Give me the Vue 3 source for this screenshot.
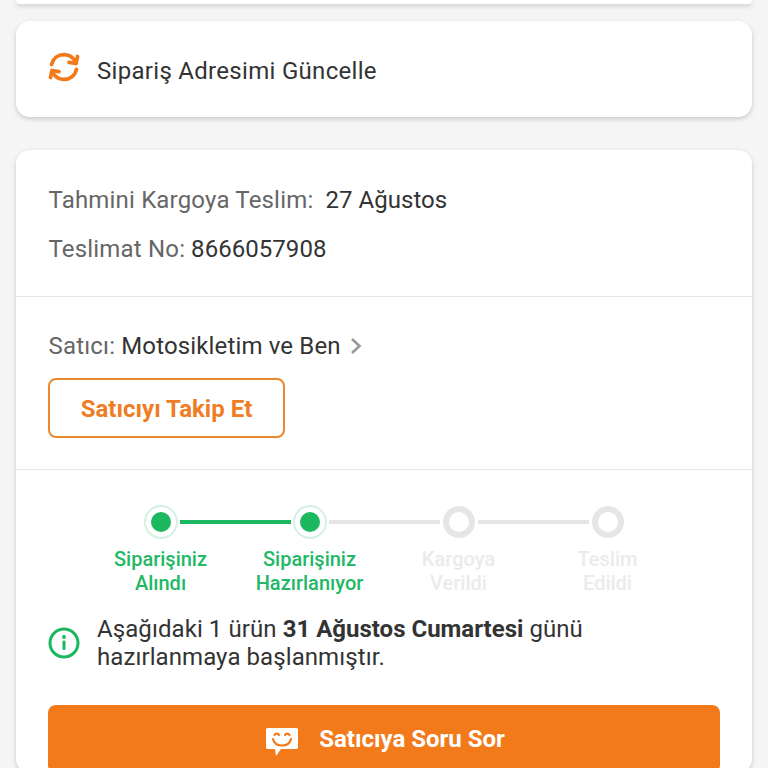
<template>
  <div class="page">
    <div class="card top-stub"></div>

    <div class="card address-card">
      <svg class="refresh-icon" viewBox="0 0 32 32" fill="none" stroke="#f27a1a" stroke-width="3.8" stroke-linecap="round" stroke-linejoin="round">
        <path d="M3.500 13.500C5 7.500 10 3.600 16 3.600c4.400 0 8 2 10.400 5.400" />
        <path d="M28.500 18.500C27 24.500 22 28.400 16 28.400c-4.400 0-8-2-10.400-5.400" />
        <path d="M29.500 5.500 28 12.500l-7-1.200" />
        <path d="M2.500 26.500 4 19.500l7 1.200" />
      </svg>
      <span class="address-text">Sipariş Adresimi Güncelle</span>
    </div>

    <div class="card detail-card">
      <section class="info-section">
        <p class="info-row"><span class="label">Tahmini Kargoya Teslim:</span><span class="value gap">27 Ağustos</span></p>
        <p class="info-row"><span class="label">Teslimat No:</span> <span class="value">8666057908</span></p>
      </section>

      <section class="seller-section">
        <div class="seller-row">
          <span class="label">Satıcı:</span><span class="value seller-name">Motosikletim ve Ben</span>
          <svg class="chevron" viewBox="0 0 12 18" fill="none" stroke="#999999" stroke-width="2.600">
            <path d="M2 2l7.500 7L2 16" />
          </svg>
        </div>
        <button class="follow-btn">Satıcıyı Takip Et</button>
      </section>

      <section class="status-section">
        <div class="steps">
          <div v-for="(step, index) in steps" :key="step.bottom" class="step" :class="{ done: step.done }">
            <div class="track">
              <span class="line" :class="lineClass(index, 'left')"></span>
              <span class="dot"></span>
              <span class="line" :class="lineClass(index, 'right')"></span>
            </div>
            <div class="step-label">{{ step.top }}<br />{{ step.bottom }}</div>
          </div>
        </div>

        <div class="notice">
          <svg class="info-icon" viewBox="0 0 32 32" fill="none">
            <circle cx="16" cy="16" r="14" stroke="#1bb85f" stroke-width="3" />
            <circle cx="16" cy="10" r="1.900" fill="#1bb85f" />
            <rect x="14.500" y="13.500" width="3" height="9.500" rx="1.200" fill="#1bb85f" />
          </svg>
          <p class="notice-text">Aşağıdaki 1 ürün <b>31 Ağustos Cumartesi</b> günü hazırlanmaya başlanmıştır.</p>
        </div>

        <button class="ask-btn">
          <svg class="chat-icon" viewBox="0 0 34 29">
            <path fill="#fff" d="M2.500 0h29A1.500 1.500 0 0 1 33 1.500v18a1.500 1.500 0 0 1-1.500 1.500H16l-5 7-1-7H2.500A1.500 1.500 0 0 1 1 19.500v-18A1.500 1.500 0 0 1 2.500 0z" />
            <g fill="none" stroke="#f27a1a" stroke-width="2.200" stroke-linecap="round">
              <path d="M8 11c1 4.500 5 6.500 9 6.500s8-2 9-6.500" />
              <path d="M9.500 7c1-1.800 3.500-1.800 4.500 0" />
              <path d="M20 7c1-1.800 3.500-1.800 4.500 0" />
            </g>
          </svg>
          <span class="ask-text">Satıcıya Soru Sor</span>
        </button>
      </section>
    </div>
  </div>
</template>

<script setup>
const steps = [
  { top: 'Siparişiniz', bottom: 'Alındı', done: true },
  { top: 'Siparişiniz', bottom: 'Hazırlanıyor', done: true },
  { top: 'Kargoya', bottom: 'Verildi', done: false },
  { top: 'Teslim', bottom: 'Edildi', done: false }
]

// hat yeşil olsun mu: iki uçtaki adım da tamamlandıysa
function lineClass(index, side) {
  const other = side === 'left' ? index - 1 : index + 1
  if (other < 0 || other >= steps.length) return 'hidden'
  return steps[index].done && steps[other].done ? 'green' : ''
}
</script>

<style>
html, body {
  margin: 0;
  background: #f5f5f5;
  overflow: hidden;
}
</style>

<style scoped>
.page {
  height: 768px;
  overflow: hidden;
  padding: 0 16px;
  box-sizing: border-box;
  background: #f5f5f5;
  font-family: Roboto, "Liberation Sans", sans-serif;
  color: #333333;
}
.card {
  background: #fff;
  border-radius: 14px;
  box-shadow: 0 2px 5px rgba(0, 0, 0, 0.18);
}
.top-stub {
  height: 4px;
  border-radius: 0 0 14px 14px;
  margin-bottom: 17px;
}
.address-card {
  height: 96px;
  display: flex;
  align-items: center;
  padding: 0 32px;
  margin-bottom: 33px;
  box-sizing: border-box;
}
.refresh-icon {
  width: 32px;
  height: 32px;
  margin-right: 17px;
  margin-top: -5px;
}
.address-text {
  font-size: 24px;
  letter-spacing: 0.3px;
  padding-top: 3px;
}
.info-section {
  padding: 32px 32px 16px;
  border-bottom: 1px solid #e6e6e6;
}
.info-row {
  margin: 0;
  font-size: 24px;
  line-height: 36px;
  height: 49px;
}
.label {
  color: #666666;
  letter-spacing: 0.18px;
  margin-left: 0.5px;
}
.value {
  color: #333333;
  letter-spacing: 0.05px;
}
.gap {
  margin-left: 12px;
}
.seller-section {
  padding: 31px 32px;
  border-bottom: 1px solid #e6e6e6;
}
.seller-row {
  display: flex;
  align-items: center;
  font-size: 24px;
  line-height: 36px;
  margin-bottom: 14px;
}
.seller-name {
  margin-left: 6px;
  letter-spacing: 0.15px;
}
.chevron {
  width: 12px;
  height: 18px;
  margin-left: 9px;
}
.follow-btn {
  display: block;
  width: 237px;
  height: 60px;
  padding: 1px 0 0;
  background: #fff;
  border: 2px solid #e8892f;
  border-radius: 8px;
  color: #ee7d25;
  font-family: inherit;
  font-size: 24px;
  font-weight: 700;
}
.status-section {
  padding: 33px 32px 0;
}
.steps {
  display: grid;
  grid-template-columns: repeat(4, 149px);
  justify-content: center;
}
.step {
  text-align: center;
  color: #ebebeb;
}
.step.done {
  color: #22b866;
}
.track {
  display: flex;
  align-items: center;
  height: 38px;
}
.line {
  flex: 1;
  height: 4px;
  background: #e6e6e6;
}
.line.green {
  background: #1bb85f;
}
.line.hidden {
  visibility: hidden;
}
.dot {
  width: 32px;
  height: 32px;
  box-sizing: border-box;
  border: 6px solid #e6e6e6;
  border-radius: 50%;
  margin: 0 3px;
}
.done .dot {
  width: 20px;
  height: 20px;
  border: 0;
  background: #1bb85f;
  margin: 0 9px;
  box-shadow: 0 0 0 5px #fff, 0 0 0 7px #d5f1e2;
}
.step-label {
  font-size: 20px;
  font-weight: 500;
  line-height: 24px;
  margin-top: 6px;
}
.notice {
  display: flex;
  align-items: center;
  margin-top: 20px;
}
.info-icon {
  width: 32px;
  height: 32px;
  flex: none;
  margin-right: 17px;
}
.notice-text {
  margin: 0;
  font-size: 24px;
  line-height: 28px;
  letter-spacing: 0.08px;
  color: #333333;
}
.notice-text b {
  font-weight: 700;
  letter-spacing: 0;
}
.ask-btn {
  display: flex;
  align-items: center;
  justify-content: center;
  width: 100%;
  height: 68px;
  margin-top: 34px;
  padding: 0 0 0 2px;
  background: #f27a1a;
  border: 0;
  border-radius: 8px;
  color: #fff;
  font-family: inherit;
  font-size: 24px;
  font-weight: 700;
}
.chat-icon {
  width: 34px;
  height: 29px;
  margin-right: 19px;
  margin-top: 6px;
}
.ask-text {
  margin-left: 1px;
}
</style>
